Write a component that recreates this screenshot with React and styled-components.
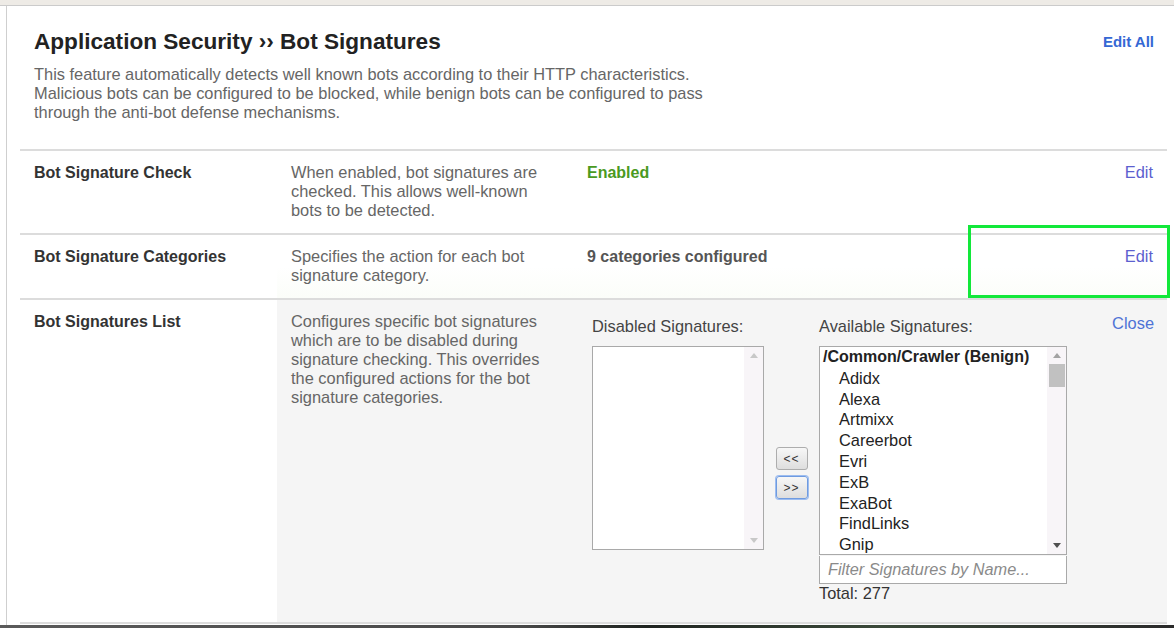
import React from 'react';
import styled, { createGlobalStyle } from 'styled-components';

const GlobalStyle = createGlobalStyle`
  html, body {
    margin: 0;
    padding: 0;
    height: 628px;
    overflow: hidden;
    background: #fff;
  }
  body {
    font-family: "Liberation Sans", Arial, sans-serif;
    color: #333;
  }
  * { box-sizing: border-box; }
`;

const Page = styled.div`
  display: flex;
  flex-direction: column;
  height: 628px;
`;

const TopBar = styled.div`
  height: 6px;
  background: #eeebe6;
  border-bottom: 1px solid #cbcbcb;
`;

const Panel = styled.div`
  flex: 1;
  margin-left: 6px;
  border-left: 1px solid #cfcfcf;
  display: flex;
  flex-direction: column;
`;

const Header = styled.div`
  display: flex;
  justify-content: space-between;
  align-items: flex-start;
  padding: 23px 20px 0 27px;
`;

const Title = styled.h1`
  margin: 0;
  font-size: 22.6px;
  line-height: 26px;
  font-weight: bold;
  color: #222;
`;

const Intro = styled.p`
  margin: 10px 0 0;
  max-width: 700px;
  font-size: 16.4px;
  line-height: 19px;
  color: #666;
`;

const Link = styled.a`
  font-size: ${p => (p.$strong ? '15px' : '16.4px')};
  font-weight: ${p => (p.$strong ? 'bold' : 'normal')};
  line-height: ${p => (p.$strong ? '26px' : '19px')};
  color: ${p => p.$color || '#4f73d6'};
  text-decoration: none;
  cursor: pointer;
  white-space: nowrap;
`;

const Table = styled.div`
  margin: 27px 7px 0 13px;
  border-bottom: 2px solid #dcdcdc;
`;

const Row = styled.div`
  position: relative;
  display: grid;
  grid-template-columns: 257px 296px 1fr auto;
  border-top: 2px solid #dcdcdc;
`;

const Cell = styled.div`
  padding: ${p => p.$pad || '12px 14px 13px'};
  font-size: 16.4px;
  line-height: 19px;
  background: ${p =>
    p.$shade
      ? '#f5f5f5'
      : p.$tint
      ? 'linear-gradient(to bottom, #fff 50%, #fbfdf9)'
      : '#fff'};
  text-align: ${p => (p.$right ? 'right' : 'left')};
`;

const Label = styled.div`
  font-size: 16px;
  font-weight: bold;
  color: #333;
`;

const Desc = styled.div`
  color: #666;
`;

const Value = styled.div`
  font-size: 16px;
  font-weight: bold;
  color: ${p => p.$color || '#555'};
`;

const Highlight = styled.div`
  position: absolute;
  left: 948px;
  top: -10px;
  width: 202px;
  height: 73px;
  border: 3px solid #12e83a;
  pointer-events: none;
`;

const Editor = styled.div`
  display: flex;
  align-items: flex-start;
  gap: 11px;
  margin-left: 5px;
`;

const Column = styled.div`
  display: flex;
  flex-direction: column;
  width: ${p => p.$w}px;
`;

const FieldLabel = styled.div`
  font-size: 16.4px;
  line-height: 19px;
  color: #444;
  margin-bottom: 10px;
  white-space: nowrap;
`;

const ListBox = styled.div`
  display: flex;
  height: ${p => p.$h}px;
  border: 1px solid #a9a9a9;
  background: #fff;
`;

const Items = styled.div`
  flex: 1;
  overflow: hidden;
  font-size: 16.4px;
  line-height: 20.8px;
  color: #222;
`;

const Group = styled.div`
  font-size: 16px;
  font-weight: bold;
  padding-left: 3px;
  white-space: nowrap;
`;

const Option = styled.div`
  padding-left: 19px;
  white-space: nowrap;
`;

const Track = styled.div`
  width: 19px;
  display: flex;
  flex-direction: column;
  align-items: center;
  background: #f8f5f8;
`;

const Arrow = styled.div`
  height: 17px;
  display: flex;
  align-items: center;
  justify-content: center;
`;

const Thumb = styled.div`
  width: 16px;
  height: 23px;
  background: #c1c1c1;
`;

const Spacer = styled.div`
  flex: 1;
`;

const ButtonStack = styled.div`
  display: flex;
  flex-direction: column;
  align-items: center;
  gap: 6px;
  margin-top: 130px;
  width: 33px;
`;

const MoveButton = styled.button`
  width: 32px;
  height: 23px;
  padding: 0;
  font-family: "Liberation Sans", Arial, sans-serif;
  font-size: 12px;
  letter-spacing: 1px;
  color: #333;
  background: linear-gradient(to bottom, #f7f7f7, #dedede);
  border: 1px solid ${p => (p.$focus ? '#6f9be0' : '#adadad')};
  box-shadow: ${p => (p.$focus ? '0 0 0 1px #9dbdf0' : 'none')};
  border-radius: 3px;
`;

const Filter = styled.input`
  height: 28px;
  width: 100%;
  border: 1px solid #a9a9a9;
  border-top: none;
  margin-top: 1px;
  padding: 0 8px;
  font-family: "Liberation Sans", Arial, sans-serif;
  font-size: 16.3px;
  outline: none;
  &::placeholder {
    color: #8a8a8a;
    font-style: italic;
  }
`;

const Total = styled.div`
  font-size: 16.4px;
  line-height: 19px;
  color: #333;
`;

const Footer = styled.div`
  height: 3px;
  background: linear-gradient(90deg, #5a5a5a 0%, #4a4a4a 44%, #1f2420 55%, #3b4a3a 75%, #2b2b2b 100%);
`;

const Tri = ({ up, color }) => (
  <svg width="8" height="5" viewBox="0 0 8 5">
    <polygon points={up ? '0,5 8,5 4,0' : '0,0 8,0 4,5'} fill={color} />
  </svg>
);

const Scroll = ({ active }) => (
  <Track>
    <Arrow>
      <Tri up color={active ? '#a3a3a3' : '#c8c8c8'} />
    </Arrow>
    {active && <Thumb />}
    <Spacer />
    <Arrow>
      <Tri color={active ? '#505050' : '#c8c8c8'} />
    </Arrow>
  </Track>
);

const signatures = [
  'Adidx',
  'Alexa',
  'Artmixx',
  'Careerbot',
  'Evri',
  'ExB',
  'ExaBot',
  'FindLinks',
  'Gnip'
];

export default function App() {
  return (
    <>
      <GlobalStyle />
      <Page>
        <TopBar />
        <Panel>
          <Header>
            <div>
              <Title>Application Security ›› Bot Signatures</Title>
              <Intro>
                This feature automatically detects well known bots according to their HTTP
                characteristics. Malicious bots can be configured to be blocked, while benign
                bots can be configured to pass through the anti-bot defense mechanisms.
              </Intro>
            </div>
            <Link $strong $color="#3568d4">Edit All</Link>
          </Header>

          <Table>
            <Row>
              <Cell><Label>Bot Signature Check</Label></Cell>
              <Cell $pad="12px 28px 13px 14px">
                <Desc>When enabled, bot signatures are checked. This allows well-known bots to be detected.</Desc>
              </Cell>
              <Cell><Value $color="#4b9a1f">Enabled</Value></Cell>
              <Cell $right><Link $color="#5c5fcf">Edit</Link></Cell>
            </Row>

            <Row>
              <Cell><Label>Bot Signature Categories</Label></Cell>
              <Cell $tint $pad="12px 28px 13px 14px">
                <Desc>Specifies the action for each bot signature category.</Desc>
              </Cell>
              <Cell $tint><Value>9 categories configured</Value></Cell>
              <Cell $tint $right><Link $color="#5c5fcf">Edit</Link></Cell>
              <Highlight />
            </Row>

            <Row>
              <Cell><Label>Bot Signatures List</Label></Cell>
              <Cell $shade $pad="12px 28px 13px 14px">
                <Desc>
                  Configures specific bot signatures which are to be disabled during signature
                  checking. This overrides the configured actions for the bot signature categories.
                </Desc>
              </Cell>
              <Cell $shade $pad="17px 0 19px 14px">
                <Editor>
                  <Column $w={172}>
                    <FieldLabel>Disabled Signatures:</FieldLabel>
                    <ListBox $h={204}>
                      <Items />
                      <Scroll />
                    </ListBox>
                  </Column>
                  <ButtonStack>
                    <MoveButton>&lt;&lt;</MoveButton>
                    <MoveButton $focus>&gt;&gt;</MoveButton>
                  </ButtonStack>
                  <Column $w={248}>
                    <FieldLabel>Available Signatures:</FieldLabel>
                    <ListBox $h={209}>
                      <Items>
                        <Group>/Common/Crawler (Benign)</Group>
                        {signatures.map(name => (
                          <Option key={name}>{name}</Option>
                        ))}
                      </Items>
                      <Scroll active />
                    </ListBox>
                    <Filter placeholder="Filter Signatures by Name..." />
                    <Total>Total: 277</Total>
                  </Column>
                </Editor>
              </Cell>
              <Cell $shade $right $pad="14px 13px 13px 14px">
                <Link>Close</Link>
              </Cell>
            </Row>
          </Table>
        </Panel>
        <Footer />
      </Page>
    </>
  );
}
